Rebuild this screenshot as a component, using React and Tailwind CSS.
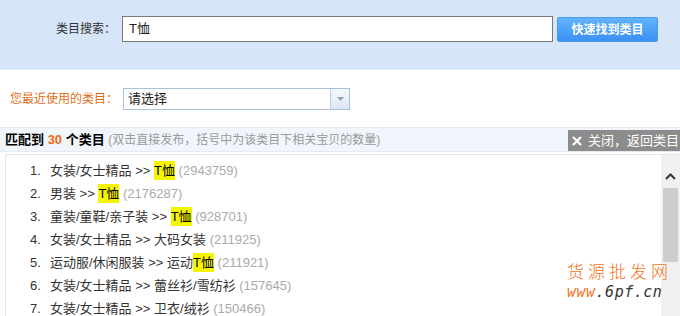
import React from 'react';

const rows = [
  { path: '女装/女士精品 >> ', hit: 'T恤', count: '2943759' },
  { path: '男装 >> ', hit: 'T恤', count: '2176287' },
  { path: '童装/童鞋/亲子装 >> ', hit: 'T恤', count: '928701' },
  { path: '女装/女士精品 >> 大码女装', hit: '', count: '211925' },
  { path: '运动服/休闲服装 >> 运动', hit: 'T恤', count: '211921' },
  { path: '女装/女士精品 >> 蕾丝衫/雪纺衫', hit: '', count: '157645' },
  { path: '女装/女士精品 >> 卫衣/绒衫', hit: '', count: '150466' },
];

const font = { fontFamily: '"Liberation Sans", "Noto Sans CJK SC", sans-serif' };

const App = () => {
  return (
    <div className="w-[680px] h-[316px] overflow-hidden bg-white text-[12px] text-[#333]" style={font}>
      {/* 搜索栏 */}
      <div className="h-[70px] bg-[#d7e5f8] border-b border-[#e6eefa] flex items-start pt-[16px]">
        <label className="w-[122px] pr-[6px] text-right leading-[26px] text-[#333]">类目搜索：</label>
        <div className="w-[431px] h-[26px] border border-[#7a7a7a] bg-white px-[6px] leading-[24px] text-[13px] text-[#222]">T恤</div>
        <button className="ml-[4px] mt-[1px] w-[101px] h-[25px] rounded-[2px] bg-gradient-to-b from-[#62b3ff] to-[#3b90f2] border border-[#4a9ae8] text-white font-bold text-[12px]">
          快速找到类目
        </button>
      </div>

      {/* 最近使用 */}
      <div className="h-[57px] flex items-start pt-[18px]">
        <span className="pl-[10px] w-[123px] leading-[22px] text-[#e06f1c]">您最近使用的类目：</span>
        <div className="w-[227px] h-[22px] border border-[#a9c0da] bg-white flex">
          <span className="flex-1 px-[4px] leading-[20px] text-[13px] text-[#222]">请选择</span>
          <span className="w-[19px] h-full border-l border-[#b8cbe0] bg-gradient-to-b from-[#f4f8fc] to-[#dde7f2] flex items-center justify-center">
            <svg width="7" height="4" viewBox="0 0 7 4"><path d="M0 0h7L3.5 4z" fill="#8da2b8" /></svg>
          </span>
        </div>
      </div>

      {/* 结果头 */}
      <div className="h-[25px] bg-[#f1f6fc] border-t border-[#e3eaf3] border-b border-b-[#e3eaf3] flex items-center justify-between pl-[5px]">
        <div className="text-[13px] whitespace-pre">
          <b className="text-black">匹配到 </b>
          <b className="text-[#f06a14]">30</b>
          <b className="text-black"> 个类目 </b>
          <span className="text-[#999] text-[12px]">(双击直接发布，括号中为该类目下相关宝贝的数量)</span>
        </div>
        <div className="h-[21px] w-[112px] bg-[#8c8c8c] text-white text-[13px] flex items-center pl-[4px] gap-[6px] self-start mt-[2px]">
          <svg width="10" height="10" viewBox="0 0 10 10"><path d="M1 1l8 8M9 1l-8 8" stroke="#fff" strokeWidth="2.2" /></svg>
          <span>关闭，返回类目</span>
        </div>
      </div>

      {/* 列表 */}
      <div className="relative ml-[5px] mt-[2px] h-[200px] border-l border-t border-[#dfe6ee] rounded-tl-[3px] flex">
        <ol className="flex-1 pt-[4px] pl-[24px] text-[13px]">
          {rows.map((r, i) => (
            <li key={i} className="flex h-[23px] items-center whitespace-pre">
              <span className="w-[20px]">{i + 1}.</span>
              <span>{r.path}</span>
              {r.hit && <span className="bg-[#f6f500] text-black">{r.hit}</span>}
              <span className="text-[#aaa]"> ({r.count})</span>
            </li>
          ))}
        </ol>
        <div className="w-[19px] h-full bg-[#f0f0f0] flex flex-col items-center">
          <svg className="mt-[18px]" width="11" height="7" viewBox="0 0 11 7"><path d="M1 6l4.5-4.5L10 6" stroke="#333" strokeWidth="2" fill="none" /></svg>
          <div className="mt-[8px] w-[15px] h-[74px] bg-[#cdcdcd]" />
        </div>
        {/* 水印 */}
        <div className="absolute left-[561px] top-[107px] leading-none" style={{ fontFamily: '"Noto Sans CJK SC", sans-serif' }}>
          <div className="text-[17px] tracking-[4px] text-[#f07322] font-light">货源批发网</div>
          <div className="mt-[6px] text-[15px] tracking-[0.5px] text-[#333] font-['DejaVu_Sans_Mono'] italic"><span className="text-[#f07322]">www</span>.6pf.cn</div>
        </div>
      </div>
    </div>
  );
};

export default App;
